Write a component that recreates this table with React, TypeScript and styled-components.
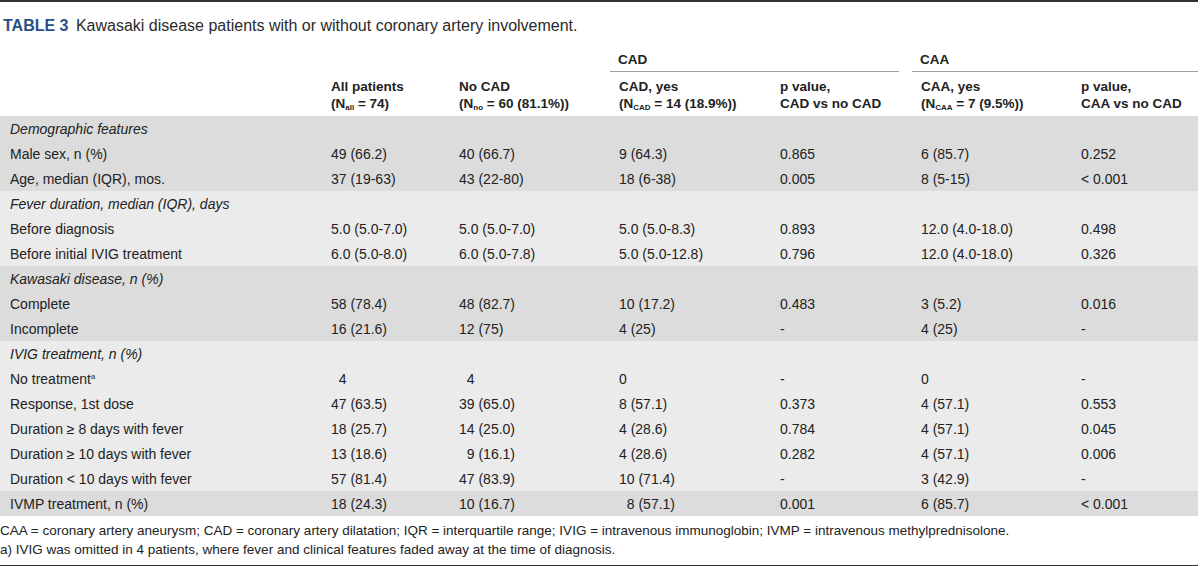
import React from "react";
import styled, { createGlobalStyle } from "styled-components";

const Global = createGlobalStyle`
  html, body {
    margin: 0;
    padding: 0;
    background: #ffffff;
  }
  body {
    font-family: "Liberation Sans", Arial, sans-serif;
    color: #222222;
  }
`;

const COLS = "323px 128px 160px 161px 141px 160px 125px";

const Page = styled.div`
  width: 1198px;
  border-top: 2px solid #333333;
  display: flex;
  flex-direction: column;

  & > * {
    flex-shrink: 0;
  }
`;

const Title = styled.div`
  margin-top: 14px;
  padding-left: 3px;
  font-size: 16px;
  line-height: 20px;
  color: #2a2a2a;

  & > b {
    color: #2a5185;
    font-weight: bold;
    margin-right: 3px;
  }
`;

const Head = styled.div`
  margin-top: 15px;
  display: grid;
  grid-template-columns: ${COLS};
  font-size: 13.5px;
  font-weight: bold;
  color: #222222;
`;

const Group = styled.div<{ $start: number; $end: number; $gap?: number }>`
  grid-column: ${(p) => p.$start} / ${(p) => p.$end};
  grid-row: 1;
  line-height: 18px;
  padding: 0 0 2px 8px;
  margin-left: -1px;
  margin-right: ${(p) => p.$gap ?? 0}px;
  border-bottom: 1px solid #a0a0a0;
`;

const HeadCell = styled.div<{ $col: number }>`
  grid-column: ${(p) => p.$col};
  grid-row: 2;
  padding: 5.5px 0 4.5px 8px;
  line-height: 17px;
  white-space: nowrap;
`;

const Sub = styled.sub`
  font-size: 8px;
  vertical-align: -2px;
  line-height: 0;
`;

const Sup = styled.sup`
  font-size: 7.5px;
  vertical-align: 5px;
  line-height: 0;
`;

const Body = styled.div`
  display: flex;
  flex-direction: column;
`;

const Section = styled.div<{ $shade: "dark" | "light" }>`
  background: ${(p) => (p.$shade === "dark" ? "#dcdcdc" : "#ebebeb")};
`;

const Row = styled.div`
  display: grid;
  grid-template-columns: ${COLS};
  height: 25px;
  align-items: center;
  font-size: 14px;
`;

const Cell = styled.div`
  padding-left: 8px;
  white-space: pre;
`;

const Caption = styled.div`
  padding-left: 10px;
  font-style: italic;
  white-space: nowrap;
`;

const Label = styled.div`
  padding-left: 10px;
`;

const Foot = styled.div`
  margin-top: 5px;
  font-size: 13.5px;
  line-height: 19px;
  color: #222222;
`;

const Rule = styled.div`
  margin-top: 6px;
  height: 2px;
  background: #333333;
`;

type DataRow = { label: React.ReactNode; values: string[] };
type SectionData = { title: string; shade: "dark" | "light"; rows: DataRow[] };

const F = "\u2007";

const sections: SectionData[] = [
  {
    title: "Demographic features",
    shade: "dark",
    rows: [
      { label: "Male sex, n (%)", values: ["49 (66.2)", "40 (66.7)", "9 (64.3)", "0.865", "6 (85.7)", "0.252"] },
      { label: "Age, median (IQR), mos.", values: ["37 (19-63)", "43 (22-80)", "18 (6-38)", "0.005", "8 (5-15)", "< 0.001"] },
    ],
  },
  {
    title: "Fever duration, median (IQR), days",
    shade: "light",
    rows: [
      { label: "Before diagnosis", values: ["5.0 (5.0-7.0)", "5.0 (5.0-7.0)", "5.0 (5.0-8.3)", "0.893", "12.0 (4.0-18.0)", "0.498"] },
      { label: "Before initial IVIG treatment", values: ["6.0 (5.0-8.0)", "6.0 (5.0-7.8)", "5.0 (5.0-12.8)", "0.796", "12.0 (4.0-18.0)", "0.326"] },
    ],
  },
  {
    title: "Kawasaki disease, n (%)",
    shade: "dark",
    rows: [
      { label: "Complete", values: ["58 (78.4)", "48 (82.7)", "10 (17.2)", "0.483", "3 (5.2)", "0.016"] },
      { label: "Incomplete", values: ["16 (21.6)", "12 (75)", "4 (25)", "-", "4 (25)", "-"] },
    ],
  },
  {
    title: "IVIG treatment, n (%)",
    shade: "light",
    rows: [
      { label: <>No treatment<Sup>a</Sup></>, values: [F + "4", F + "4", "0", "-", "0", "-"] },
      { label: "Response, 1st dose", values: ["47 (63.5)", "39 (65.0)", "8 (57.1)", "0.373", "4 (57.1)", "0.553"] },
      { label: "Duration \u2265 8 days with fever", values: ["18 (25.7)", "14 (25.0)", "4 (28.6)", "0.784", "4 (57.1)", "0.045"] },
      { label: "Duration \u2265 10 days with fever", values: ["13 (18.6)", F + "9 (16.1)", "4 (28.6)", "0.282", "4 (57.1)", "0.006"] },
      { label: "Duration < 10 days with fever", values: ["57 (81.4)", "47 (83.9)", "10 (71.4)", "-", "3 (42.9)", "-"] },
    ],
  },
];

const last: DataRow = {
  label: "IVMP treatment, n (%)",
  values: ["18 (24.3)", "10 (16.7)", F + "8 (57.1)", "0.001", "6 (85.7)", "< 0.001"],
};

const DataLine: React.FC<{ row: DataRow }> = ({ row }) => (
  <Row>
    <Label>{row.label}</Label>
    {row.values.map((v, i) => (
      <Cell key={i}>{v}</Cell>
    ))}
  </Row>
);

export default function App() {
  return (
    <>
      <Global />
      <Page>
        <Title>
          <b>TABLE 3</b> Kawasaki disease patients with or without coronary artery involvement.
        </Title>
        <Head>
          <Group $start={4} $end={6} $gap={14}>CAD</Group>
          <Group $start={6} $end={8}>CAA</Group>
          <HeadCell $col={2}>All patients<br />(N<Sub>all</Sub> = 74)</HeadCell>
          <HeadCell $col={3}>No CAD<br />(N<Sub>no</Sub> = 60 (81.1%))</HeadCell>
          <HeadCell $col={4}>CAD, yes<br />(N<Sub>CAD</Sub> = 14 (18.9%))</HeadCell>
          <HeadCell $col={5}>p value,<br />CAD vs no CAD</HeadCell>
          <HeadCell $col={6}>CAA, yes<br />(N<Sub>CAA</Sub> = 7 (9.5%))</HeadCell>
          <HeadCell $col={7}>p value,<br />CAA vs no CAD</HeadCell>
        </Head>
        <Body>
          {sections.map((s) => (
            <Section key={s.title} $shade={s.shade}>
              <Row>
                <Caption>{s.title}</Caption>
              </Row>
              {s.rows.map((r, i) => (
                <DataLine key={i} row={r} />
              ))}
            </Section>
          ))}
          <Section $shade="dark">
            <DataLine row={last} />
          </Section>
        </Body>
        <Foot>
          CAA = coronary artery aneurysm; CAD = coronary artery dilatation; IQR = interquartile range; IVIG = intravenous immunoglobin; IVMP = intravenous methylprednisolone.
          <br />
          a) IVIG was omitted in 4 patients, where fever and clinical features faded away at the time of diagnosis.
        </Foot>
        <Rule />
      </Page>
    </>
  );
}
